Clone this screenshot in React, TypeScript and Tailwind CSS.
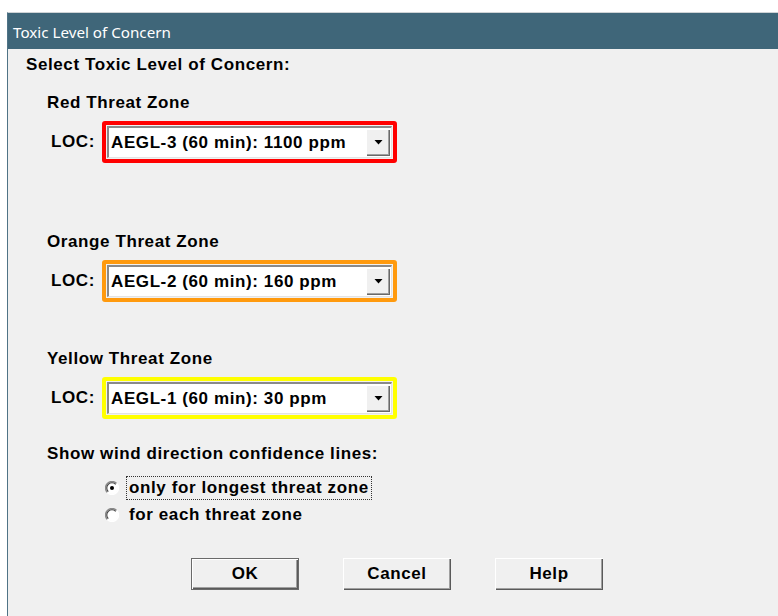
import React, { useState } from "react";

type Zone = {
  title: string;
  value: string;
  ring: string;
  gapTop: string;
};

const zones: Zone[] = [
  { title: "Red Threat Zone", value: "AEGL-3 (60 min): 1100 ppm", ring: "border-[#ff0000]", gapTop: "mt-[18px]" },
  { title: "Orange Threat Zone", value: "AEGL-2 (60 min): 160 ppm", ring: "border-[#ff9a0e]", gapTop: "mt-[69px]" },
  { title: "Yellow Threat Zone", value: "AEGL-1 (60 min): 30 ppm", ring: "border-[#ffff00]", gapTop: "mt-[47px]" },
];

const pixelFont = "font-['Liberation_Sans',Arial,sans-serif] font-bold text-[17px] tracking-[0.6px] text-black";

function DropArrow() {
  return (
    <div className="w-[24px] h-full shrink-0 bg-[#f0f0f0] flex items-center justify-center shadow-[inset_1px_1px_0_#ffffff,inset_-1px_-1px_0_#696969,inset_-2px_-2px_0_#a0a0a0]">
      <svg width="9" height="5" viewBox="0 0 9 5" className="shrink-0">
        <path d="M0.5 0h8L4.5 4.5z" fill="#000" />
      </svg>
    </div>
  );
}

function LocPicker({ zone }: { zone: Zone }) {
  return (
    <div className="flex items-center pl-[43px]">
      <span className={`${pixelFont} w-[51px]`}>LOC:</span>
      <div className={`w-[295px] h-[42px] border-[4px] rounded-[3px] ${zone.ring} p-[1px] bg-[#f0f0f0]`}>
        <div className="h-full flex bg-white border-t-2 border-l-2 border-t-[#8a8a8a] border-l-[#8a8a8a] border-b border-r border-b-[#e3e3e3] border-r-[#e3e3e3] py-[1px] pr-[1px]">
          <div className={`${pixelFont} flex-1 flex items-center pl-[2px]`}>{zone.value}</div>
          <DropArrow />
        </div>
      </div>
    </div>
  );
}

// classic sunken radio: dark arc top-left, light arc bottom-right
function Radio({ checked }: { checked: boolean }) {
  return (
    <svg width="14" height="14" viewBox="0 0 14 14" className="shrink-0 w-[14px] h-[14px]">
      <circle cx="7" cy="7" r="6" fill="#fff" />
      <path d="M2.4 11.6A6.5 6.5 0 0 1 11.6 2.4" stroke="#8a8a8a" strokeWidth="1.4" fill="none" />
      <path d="M3.3 10.7A5.2 5.2 0 0 1 10.7 3.3" stroke="#404040" strokeWidth="1.1" fill="none" />
      <path d="M11.6 2.4A6.5 6.5 0 0 1 2.4 11.6" stroke="#ffffff" strokeWidth="1.4" fill="none" />
      {checked && <circle cx="7" cy="7" r="2" fill="#000" />}
    </svg>
  );
}

function ClassicButton({ label, isDefault }: { label: string; isDefault?: boolean }) {
  return (
    <button
      type="button"
      className={`w-[108px] h-[32px] bg-[#f0f0f0] ${pixelFont} flex items-center justify-center ${
        isDefault
          ? "border border-[#6a6a6a] shadow-[inset_1px_1px_0_#ffffff,inset_-1px_-1px_0_#5a5a5a,inset_-2px_-2px_0_#a0a0a0]"
          : "shadow-[inset_1px_1px_0_#ffffff,inset_-1px_-1px_0_#5a5a5a,inset_-2px_-2px_0_#a0a0a0]"
      }`}
    >
      {label}
    </button>
  );
}

export default function App() {
  const [longestOnly, setLongestOnly] = useState(true);

  return (
    <div className="w-[778px] h-[616px] bg-white pt-[12px] pl-[7px] overflow-hidden">
      <div className="h-full border-l border-l-[#4f7386] border-t border-t-[#cfd3d6] flex flex-col">
        <div className="h-[36px] bg-[#3f6679] flex items-center pl-[5px] pt-[2px] text-white font-['Noto_Sans',sans-serif] text-[15.2px]">
          Toxic Level of Concern
        </div>

        <div className="flex-1 bg-[#f0f0f0] flex flex-col">
          <div className={`${pixelFont} pl-[18px] mt-[6px] h-[20px] leading-[20px]`}>Select Toxic Level of Concern:</div>

          {zones.map((zone) => (
            <div key={zone.title} className={zone.gapTop}>
              <div className={`${pixelFont} pl-[39px] h-[20px] leading-[20px] mb-[8px]`}>{zone.title}</div>
              <LocPicker zone={zone} />
            </div>
          ))}

          <div className={`${pixelFont} pl-[39px] mt-[25px] h-[20px] leading-[20px]`}>Show wind direction confidence lines:</div>

          <div className="mt-[12px] pl-[97px] flex flex-col gap-[3px]">
            {[
              { label: "only for longest threat zone", on: true },
              { label: "for each threat zone", on: false },
            ].map((opt) => {
              const checked = opt.on === longestOnly;
              return (
                <label key={opt.label} className="flex items-center h-[24px] cursor-default" onClick={() => setLongestOnly(opt.on)}>
                  <Radio checked={checked} />
                  <span
                    className={`${pixelFont} ml-[7px] h-[24px] px-[2px] flex items-center border border-dotted ${
                      checked ? "border-[#333]" : "border-transparent"
                    }`}
                  >
                    {opt.label}
                  </span>
                </label>
              );
            })}
          </div>

          <div className="mt-[31px] pl-[183px] flex gap-[44px]">
            <ClassicButton label="OK" isDefault />
            <ClassicButton label="Cancel" />
            <ClassicButton label="Help" />
          </div>
        </div>
      </div>
    </div>
  );
}
